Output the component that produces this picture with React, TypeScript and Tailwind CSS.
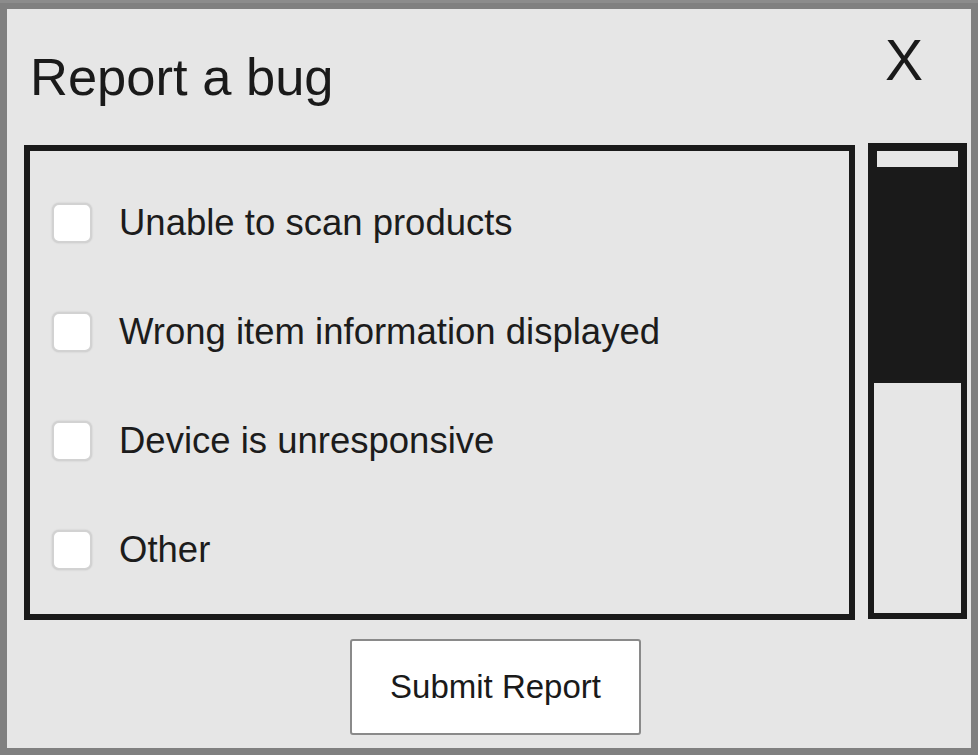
const issues = [
  'Unable to scan products',
  'Wrong item information displayed',
  'Device is unresponsive',
  'Other',
]

function IssueRow({ label }: { label: string }) {
  return (
    <label className="flex h-[109px] items-center gap-[27px]">
      <span className="h-[40px] w-[40px] shrink-0 rounded-[7px] border-2 border-[#d2d2d2] bg-white shadow-[0_0_2px_rgba(0,0,0,0.15)]" />
      <span className="text-[36.5px] leading-none text-[#1c1c1c]">{label}</span>
    </label>
  )
}

function Scrollbar() {
  return (
    <div className="flex h-[476px] w-[99px] shrink-0 flex-col border-[6px] border-[#1a1a1a] bg-[#e6e6e6]">
      <div className="h-[234px] bg-[#1a1a1a] px-[3px] pt-[2px]">
        <div className="h-[16px] bg-[#e6e6e6]" />
      </div>
    </div>
  )
}

export default function App() {
  return (
    <div className="h-[755px] w-[978px] overflow-hidden bg-[#8c8c8c] pt-[3px] font-['Liberation_Sans',Arial,sans-serif]">
      <div className="flex h-[752px] flex-col border-[7px] border-t-[6px] border-[#808080] bg-[#e6e6e6] pl-[17px] pr-[4px]">
        <div className="flex items-start justify-between">
          <h1 className="mt-[42px] ml-[6px] text-[52.5px] leading-none font-normal text-[#1a1a1a]">Report a bug</h1>
          <button type="button" className="mt-[23px] mr-[44px] text-[57px] leading-none text-[#1a1a1a]">
            X
          </button>
        </div>

        <div className="mt-[39px] flex gap-[13px]">
          <div className="mt-[2px] h-[475px] flex-1 border-[6px] border-[#1a1a1a] pl-[22px] pt-[18px]">
            {issues.map((issue) => (
              <IssueRow key={issue} label={issue} />
            ))}
          </div>
          <Scrollbar />
        </div>

        <div className="mt-[19px] flex justify-center">
          <button
            type="button"
            className="h-[96px] w-[291px] rounded-[3px] border-2 border-[#8a8a8a] bg-white text-[33px] text-[#1a1a1a]"
          >
            Submit Report
          </button>
        </div>
      </div>
    </div>
  )
}
